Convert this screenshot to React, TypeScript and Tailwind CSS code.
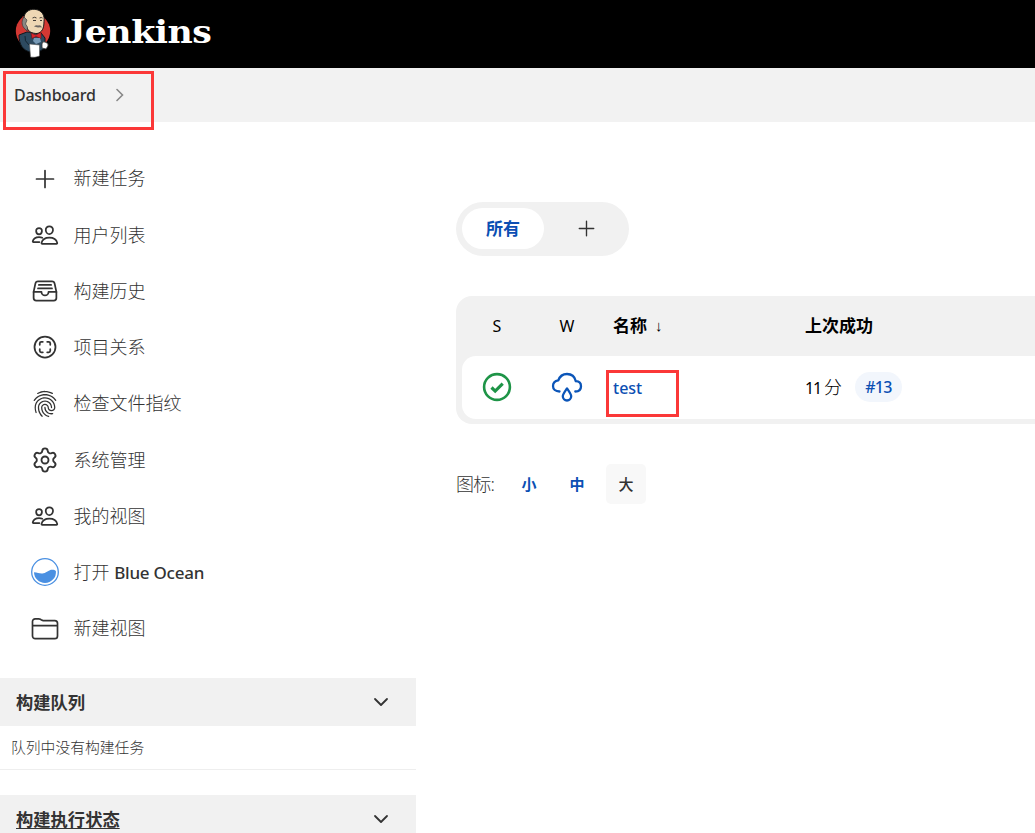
import type { ReactNode } from "react";
import { Settings } from "lucide-react";
import {
  IoPeopleOutline,
  IoFileTrayFullOutline,
  IoScanCircleOutline,
  IoFingerPrintOutline,
} from "react-icons/io5";

const Plus = ({ size, width }: { size: number; width: number }) => (
  <svg width={size} height={size} viewBox="0 0 20 20" fill="none" stroke="#333" strokeWidth={width} strokeLinecap="round">
    <path d="M10 1.5v17M1.5 10h17" />
  </svg>
);

const Butler = () => (
  <svg width="36" height="50" viewBox="0 0 36 50">
    <ellipse cx="18" cy="23" rx="17.2" ry="17.5" fill="#d33833" />
    <path d="M4 27 12 24l14 1 4 5 0 10-5 3-10 1C8 42 4 37 4 27z" fill="#2d4a60" stroke="#10181f" strokeWidth="1" />
    <path d="M9 9C10 3 16 .5 21 1.5c6 1 9 6 8 12 0 7-2 11-7 12-5 0-9-2-10-6-4-2-4-6-3-10.500z" fill="#eed7b4" stroke="#1a1a1a" strokeWidth="1" />
    <path d="M9 9C6.500 12 6.500 17 9 20l3 3 .5-4-2-3 1.500-4z" fill="#8a8783" stroke="#333" strokeWidth=".6" />
    <path d="M17.500 10q2-1.500 4 0M24.500 10q2-1 3 0M18 12.500h3M25 12.500h2" fill="none" stroke="#403a35" strokeWidth="1" />
    <path d="M19 18.500q2-2 4-1 3-1 4 2-2-.5-4 0-2-.5-4-1z" fill="#6d6864" />
    <path d="m16 25 5 2 5-3v6.500l-5-2-4 2z" fill="#d9262c" stroke="#681216" strokeWidth=".6" />
    <path d="m19 30 6 0 1 4-5 2-3-3z" fill="#7799b5" />
    <path d="M10 28q-1 5 4 9" fill="none" stroke="#132532" strokeWidth="1" />
    <path d="m14.500 36 10 1 0 11q-5 2-9 1z" fill="#fff" stroke="#555" strokeWidth=".6" />
    <path d="M27 36q0-3 3-2 4 1 3 4l-2 3-4-1z" fill="#fff" stroke="#333" strokeWidth=".8" />
  </svg>
);

const Folder = () => (
  <svg width="28" height="24" viewBox="0 0 28 24" fill="none" stroke="#333" strokeWidth="1.7" strokeLinejoin="round">
    <path d="M1.500 19V4.500A2.700 2.700 0 0 1 4.200 1.800h3.600c.6 0 1.100.2 1.600.5l1.200.8c.5.3 1 .5 1.600.5h11.600a2.700 2.700 0 0 1 2.700 2.700V19a2.700 2.700 0 0 1-2.700 2.700H4.200A2.700 2.700 0 0 1 1.500 19zM1.500 8.700h25" />
  </svg>
);

const BlueOcean = () => (
  <svg width="28" height="28" viewBox="0 0 28 28">
    <circle cx="14" cy="14" r="13.3" fill="#fff" stroke="#4a90e2" strokeWidth="1.3" />
    <path d="M3 14.200c4 .2 6 1.800 9.500 1 4-.8 5-3.600 9-3.500 1.500 0 2.500.6 3.400 1.200A11 11 0 0 1 14 25 11 11 0 0 1 3 14.200z" fill="#4a90e2" />
  </svg>
);

const Chevron = () => (
  <svg width="16" height="10" viewBox="0 0 16 10" fill="none" stroke="#333" strokeWidth="1.8" strokeLinecap="round" strokeLinejoin="round">
    <path d="m2 2 6 6 6-6" />
  </svg>
);

const Success = () => (
  <svg width="30" height="30" viewBox="0 0 30 30" fill="none" stroke="#1e9447">
    <circle cx="15" cy="15" r="12.9" strokeWidth="2.6" />
    <path d="m9.500 15.500 3.700 3.600 7.500-7.400" strokeWidth="3.2" />
  </svg>
);

const Rain = () => (
  <svg width="32" height="30" viewBox="0 0 32 30" fill="none" stroke="#0b55b8" strokeWidth="2.3" strokeLinecap="round" strokeLinejoin="round">
    <path d="M8.500 19.500C4.500 19.500 2 17.200 2 14c0-3 2.200-5.100 5.300-5.600C8.700 4.400 12 2 16 2c4.600 0 7.800 3 8.800 7.200 3.300.2 5.200 2.200 5.200 5 0 3.200-2.200 5.300-5.700 5.300" />
    <path d="M16 16.500c-2.300 3.300-4.200 5.700-4.200 7.800a4.200 4.200 0 0 0 8.400 0c0-2.100-1.900-4.500-4.200-7.800z" />
  </svg>
);

const tasks: { label: ReactNode; icon: ReactNode }[] = [
  { label: "新建任务", icon: <Plus size={20} width={1.7} /> },
  { label: "用户列表", icon: <IoPeopleOutline size={28} /> },
  { label: "构建历史", icon: <IoFileTrayFullOutline size={28} /> },
  { label: "项目关系", icon: <IoScanCircleOutline size={28} /> },
  { label: "检查文件指纹", icon: <IoFingerPrintOutline size={28} /> },
  { label: "系统管理", icon: <Settings size={28} strokeWidth={1.6} /> },
  { label: "我的视图", icon: <IoPeopleOutline size={28} /> },
  {
    label: (
      <>
        打开 <span className="text-[17px] font-medium tracking-[-0.25px]">Blue Ocean</span>
      </>
    ),
    icon: <BlueOcean />,
  },
  { label: "新建视图", icon: <Folder /> },
];

export default function App() {
  return (
    <div className="relative flex h-[833px] w-[1035px] flex-col overflow-hidden bg-white font-['Noto_Sans','Noto_Sans_CJK_SC',sans-serif] text-[#333]">
      <header className="flex h-[68px] shrink-0 items-start bg-black pt-2 pl-[15px]">
        <Butler />
        <span className="ml-[14px] origin-left scale-x-[1.12] pt-px font-['DejaVu_Serif',serif] text-[31px] leading-[46px] font-bold tracking-[-0.4px] whitespace-nowrap text-white">
          <span className="font-['Liberation_Serif',serif] text-[36px] leading-none">J</span>enkins
        </span>
      </header>
      <nav className="flex h-[54px] shrink-0 items-center bg-[#f2f2f2] pl-[14px]">
        <span className="text-base font-medium tracking-[-0.25px]">Dashboard</span>
        <svg className="ml-5" width="8" height="14" viewBox="0 0 8 14" fill="none" stroke="#888" strokeWidth="1.6" strokeLinecap="round">
          <path d="m1 1.500 5.500 5.500L1 12.500" />
        </svg>
      </nav>
      <div className="flex min-h-0 flex-1">
        <aside className="w-[416px] shrink-0 pt-[28px]">
          <ul>
            {tasks.map((t, i) => (
              <li key={i} className="flex h-[56.25px] items-center pl-[31px]">
                <span className="flex w-7 justify-center pt-px">{t.icon}</span>
                <span className="ml-[14.5px] pt-[0.3px] text-lg leading-7 font-light">{t.label}</span>
              </li>
            ))}
          </ul>
          <div className="mt-[22px] flex h-12 items-center justify-between bg-[#f1f1f1] pr-[27px] pl-4 text-[17.3px] font-bold">
            <span className="pt-px">构建队列</span>
            <Chevron />
          </div>
          <div className="flex h-11 items-center border-b border-[#eee] pb-0.5 pl-[11px] text-[14.8px] font-light">
            队列中没有构建任务
          </div>
          <div className="mt-[25px] flex h-12 items-center justify-between bg-[#f1f1f1] pr-[27px] pl-4 text-[17.3px] font-bold">
            <span className="pt-px underline underline-offset-2">构建执行状态</span>
            <Chevron />
          </div>
        </aside>
        <main className="min-w-0 flex-1 pt-20 pl-10">
          <div className="flex h-[54px] w-[173px] items-center rounded-full bg-[#f1f1f1] px-1.5 pb-px">
            <span className="flex h-[41px] w-[82px] items-center justify-center rounded-full bg-white text-[17px] font-bold text-[#0b4fb3]">
              所有
            </span>
            <span className="ml-[34px]">
              <Plus size={17} width={1.6} />
            </span>
          </div>
          <section className="mt-10 h-32 rounded-l-2xl bg-[#f1f1f1] pb-[5px] pl-1.5 text-black">
            <div className="flex h-[60px] items-center text-[17px]">
              <span className="w-[70px] text-center text-base">S</span>
              <span className="w-[70px] text-center text-base">W</span>
              <span className="flex w-48 items-center pl-[11px] font-bold">
                名称
                <span className="ml-2 font-['Liberation_Serif',serif] text-[15px] leading-none font-normal">↓</span>
              </span>
              <span className="pl-[11px] font-bold">上次成功</span>
            </div>
            <div className="flex h-[63px] items-center rounded-l-[14px] bg-white pb-px">
              <span className="flex w-[70px] justify-center">
                <Success />
              </span>
              <span className="flex w-[70px] justify-center">
                <Rain />
              </span>
              <span className="w-48 pt-0.5 pl-[11px] text-base font-medium text-[#0b4fb3]">test</span>
              <span className="w-[48px] pl-[11px] text-base tracking-[-1.2px] whitespace-nowrap">
                11 <span className="text-lg font-light">分</span>
              </span>
              <span className="ml-[13px] flex h-[30px] w-[47px] items-center justify-center rounded-full bg-[#f2f6fc] text-base font-medium tracking-[-0.7px] text-[#0b4fb3]">
                #13
              </span>
            </div>
          </section>
          <div className="mt-10 flex h-10 items-center">
            <span className="w-[53px] text-lg font-light tracking-[-0.7px]">图标:</span>
            <span className="flex w-10 justify-center text-[15px] font-bold text-[#0b4fb3]">小</span>
            <span className="ml-2 flex w-10 justify-center text-[15px] font-bold text-[#0b4fb3]">中</span>
            <span className="ml-[9px] flex size-10 items-center justify-center rounded-[5px] bg-[#f8f8f8] text-[15px] font-medium">
              大
            </span>
          </div>
        </main>
      </div>
      <div className="absolute top-[71px] left-[3px] h-[59px] w-[151px] border-3 border-[#fb3838]" />
      <div className="absolute top-[370px] left-[606px] h-[47px] w-[73px] border-3 border-[#fb3838]" />
    </div>
  );
}
